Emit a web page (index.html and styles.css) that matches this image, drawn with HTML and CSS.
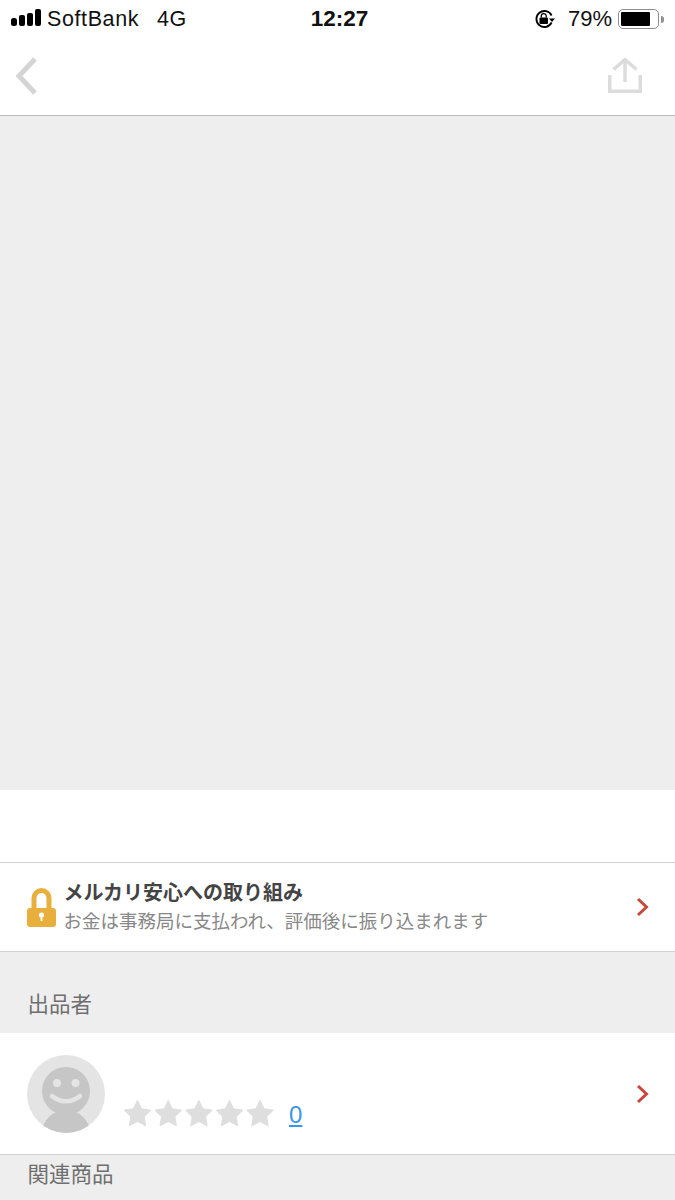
FILE: index.html
```html
<!DOCTYPE html>
<html lang="ja">
<head>
    <meta charset="UTF-8">
    <meta name="viewport" content="width=device-width, initial-scale=1.0">
    <title>商品詳細</title>
    <link rel="stylesheet" href="styles.css">
</head>
<body>
    <div class="status-bar">
        <div class="status-left">
            <svg class="signal" width="30" height="17" viewBox="0 0 30 17">
                <rect x="0" y="9" width="6" height="8" rx="2.5" fill="#000"/>
                <rect x="8" y="6" width="6" height="11" rx="2" fill="#000"/>
                <rect x="16" y="4" width="6" height="13" rx="2" fill="#000"/>
                <rect x="24" y="0" width="6" height="17" rx="2" fill="#000"/>
            </svg>
            <span class="carrier">SoftBank</span>
            <span class="network">4G</span>
        </div>
        <div class="status-time">12:27</div>
        <div class="status-right">
            <svg class="rotation-lock" width="21" height="20" viewBox="0 0 21 20">
                <path d="M17.6 13.5A8 8 0 1 1 17.6 6.5" fill="none" stroke="#000" stroke-width="1.8"/>
                <path d="M15 9.5h6l-3 3.5z" fill="#000"/>
                <rect x="5.5" y="8.5" width="8.5" height="6.5" rx="1" fill="#000"/>
                <path d="M7.3 8.5V7a2.4 2.4 0 0 1 4.9 0v1.5" fill="none" stroke="#000" stroke-width="1.3"/>
            </svg>
            <span class="battery-text">79%</span>
            <div class="battery">
                <div class="battery-level"></div>
            </div>
            <div class="battery-tip"></div>
        </div>
    </div>

    <div class="nav-bar">
        <svg width="26" height="40" viewBox="0 0 26 40">
            <path d="M21 3L5 20l16 17" fill="none" stroke="#d4d4d4" stroke-width="5"/>
        </svg>
        <svg width="34" height="35" viewBox="0 0 34 35">
            <path d="M1.75 17V33.25H32.25V17" fill="none" stroke="#dcdcdc" stroke-width="3.5"/>
            <path d="M17 24V2" fill="none" stroke="#dcdcdc" stroke-width="3.5"/>
            <path d="M5.5 11.5L17 1.5l11.5 10" fill="none" stroke="#dcdcdc" stroke-width="3.5"/>
        </svg>
    </div>

    <div class="photo-area"></div>
    <div class="blank-area"></div>

    <div class="list-row safety-row">
        <svg class="lock-icon" width="29" height="39" viewBox="0 0 29 39">
            <path d="M7 21V10a7.5 7.5 0 0 1 15 0V21" fill="none" stroke="#e9af3c" stroke-width="5"/>
            <rect x="0" y="20" width="29" height="19" rx="3" fill="#e9af3c"/>
            <circle cx="14.5" cy="27" r="2.6" fill="#fff"/>
            <rect x="13.6" y="27" width="1.8" height="6" fill="#fff"/>
        </svg>
        <div class="safety-text">
            <div class="safety-title">メルカリ安心への取り組み</div>
            <div class="safety-sub">お金は事務局に支払われ、評価後に振り込まれます</div>
        </div>
        <svg class="chevron" width="13" height="20" viewBox="0 0 13 20">
            <path d="M2 2l8.5 8L2 18" fill="none" stroke="#c9483c" stroke-width="3"/>
        </svg>
    </div>

    <div class="section-head seller-head">出品者</div>

    <div class="list-row seller-row">
        <svg class="avatar" width="78" height="78" viewBox="0 0 78 78">
            <defs>
                <clipPath id="avatar-clip"><circle cx="39" cy="39" r="39"/></clipPath>
            </defs>
            <circle cx="39" cy="39" r="39" fill="#e4e4e4"/>
            <g clip-path="url(#avatar-clip)">
                <ellipse cx="39" cy="78" rx="24" ry="23" fill="#c6c6c6"/>
            </g>
            <circle cx="39" cy="36" r="24" fill="#c6c6c6"/>
            <circle cx="30" cy="28" r="4" fill="#e4e4e4"/>
            <circle cx="48.5" cy="28" r="4" fill="#e4e4e4"/>
            <path d="M25 41c8 7 20 7 28 0" fill="none" stroke="#e4e4e4" stroke-width="4.5" stroke-linecap="round"/>
        </svg>
        <div class="rating">
            <svg class="stars" width="150" height="28" viewBox="0 0 150 28">
                <path id="star" d="M13.5.5l4.1 8.3 9.2 1.4-6.6 6.5 1.5 9.1-8.2-4.3-8.2 4.300 1.5-9.1-6.6-6.5 9.2-1.400z" fill="#dedede" stroke="#dedede" stroke-width="1" stroke-linejoin="round"/>
                <use href="#star" x="30.7"/>
                <use href="#star" x="61.4"/>
                <use href="#star" x="92"/>
                <use href="#star" x="122.5"/>
            </svg>
            <span class="rating-count">0</span>
        </div>
        <svg class="chevron" width="13" height="20" viewBox="0 0 13 20">
            <path d="M2 2l8.5 8L2 18" fill="none" stroke="#c9483c" stroke-width="3"/>
        </svg>
    </div>

    <div class="section-head related-head">関連商品</div>
</body>
</html>
```

FILE: styles.css
```css
* {
    box-sizing: border-box;
    margin: 0;
    padding: 0;
}

body {
    width: 675px;
    height: 1200px;
    overflow: hidden;
    background-color: #eeeeee;
    font-family: "Liberation Sans", "Noto Sans CJK JP", sans-serif;
}

.status-bar {
    display: grid;
    grid-template-columns: 1fr auto 1fr;
    align-items: center;
    height: 38px;
    padding: 0 11px;
    background-color: #fff;
    color: #111;
}

.status-left {
    display: flex;
    align-items: center;
    font-size: 21.5px;
    letter-spacing: 0.6px;
}

.signal {
    margin-right: 6px;
    margin-top: -3px;
}

.network {
    margin-left: 18px;
}

.status-time {
    margin-left: 4px;
    font-size: 22.5px;
    font-weight: bold;
}

.status-right {
    display: flex;
    align-items: center;
    justify-content: flex-end;
    font-size: 22px;
}

.rotation-lock {
    margin-right: 13px;
}

.battery {
    width: 41px;
    height: 20px;
    margin-left: 6px;
    padding: 2px 1.5px;
    border: 1.5px solid #8f8f8f;
    border-radius: 5px;
}

.battery-level {
    width: 29px;
    height: 100%;
    background-color: #000;
    border-radius: 1px;
}

.battery-tip {
    width: 3px;
    height: 7px;
    margin-left: 2px;
    background-color: #8f8f8f;
    border-radius: 0 3px 3px 0;
}

.nav-bar {
    display: flex;
    align-items: center;
    justify-content: space-between;
    height: 78px;
    padding: 0 33px 2px 14px;
    background-color: #fff;
    border-bottom: 1px solid #bdbdbd;
}

.photo-area {
    height: 674px;
    background-color: #eeeeee;
}

.blank-area {
    height: 72px;
    background-color: #fff;
}

.list-row {
    display: flex;
    align-items: center;
    background-color: #fff;
    border-bottom: 1px solid #d2d2d2;
}

.safety-row {
    height: 90px;
    padding: 0 26px 0 27px;
    border-top: 1px solid #d2d2d2;
}

.lock-icon {
    flex-shrink: 0;
    margin-top: 1px;
}

.safety-text {
    flex: 1;
    margin-left: 7.5px;
    padding-bottom: 2px;
}

.safety-title {
    font-family: "Noto Sans CJK JP", sans-serif;
    font-size: 20px;
    font-weight: bold;
    line-height: 28px;
    color: #444;
}

.safety-sub {
    font-family: "Noto Sans CJK JP", sans-serif;
    font-size: 18.5px;
    line-height: 28px;
    color: #888;
}

.section-head {
    font-family: "Noto Sans CJK JP", sans-serif;
    font-size: 21.5px;
    color: #6f6f6f;
    padding-left: 27.5px;
}

.seller-head {
    height: 81px;
    padding-top: 35px;
    line-height: 32px;
}

.seller-row {
    height: 122px;
    padding: 0 26px 0 27px;
}

.avatar {
    flex-shrink: 0;
    margin-top: 1px;
}

.rating {
    flex: 1;
    display: flex;
    align-items: center;
    gap: 15px;
    margin-left: 19px;
    margin-top: 40px;
}

.rating-count {
    margin-top: 2px;
    font-size: 24px;
    color: #3b97e3;
    text-decoration: underline;
}

.related-head {
    line-height: 36px;
}
```
